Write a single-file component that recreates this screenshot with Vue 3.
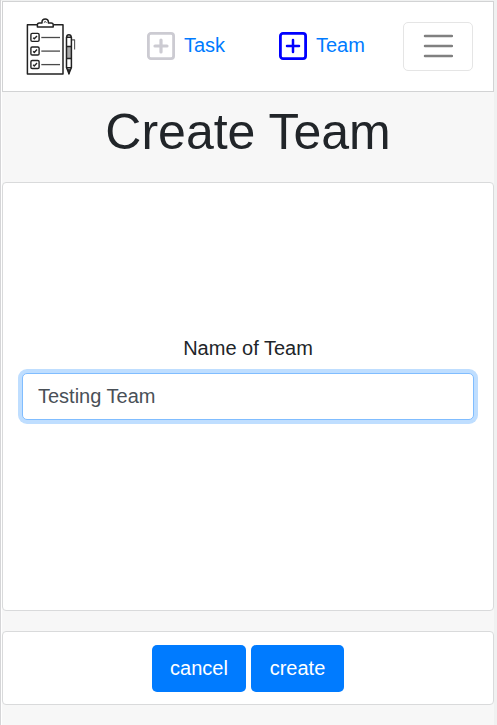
<script setup>
import { ref } from 'vue'

const teamName = ref('Testing Team')
const links = [
  { label: 'Task', tone: 'muted' },
  { label: 'Team', tone: 'active' },
]
const rows = [37.3, 50.9, 64.4]
</script>

<template>
  <div class="frame">
    <main class="page">
      <nav class="navbar">
        <svg class="logo" viewBox="24 16 54 60" fill="none" stroke="#222" stroke-width="1.5" stroke-linejoin="round">
          <path d="M37 24.8H27.4V74H63V24.8H53.5" />
          <path d="M37.4 27.1V24.8Q37.4 23 39.3 23H42V21.8Q42.2 18.9 45.2 18.9T48.4 21.8V23H51.2Q53.2 23 53.2 24.8V27.1Z" />
          <path d="M43.9 22.5Q45.2 20.6 46.5 22.5" stroke-width="1" />
          <g v-for="y in rows" :key="y">
            <rect x="30.9" :y="y - 3.9" width="8.2" height="8" rx="1.3" stroke-width="1.4" />
            <path :d="`M33.2 ${y + 0.4}l1.1 1.1 2.7-2.8`" stroke-width="1.4" />
            <path :d="`M41.3 ${y + 0.2}H60`" stroke="#4a4a4a" stroke-width="1.3" />
          </g>
          <rect x="66.5" y="46.5" width="5" height="12" fill="#aaa" stroke="none" />
          <path d="M66.5 67.5V37.2H71.4V67.5L68.9 73.6Z" />
          <path d="M66.7 37.2Q66.7 34.7 68.9 34.7T71.2 37.2M66.2 46.5H71.7M66.2 58.5H71.7M66.4 67.7H71.5" />
          <path d="M72 39.9H74.6V49.5" stroke="#555" stroke-width="1.1" />
          <path d="M68.1 69.5H69.7L68.9 74.4Z" fill="#222" stroke-width=".8" />
        </svg>
        <div class="links">
          <a v-for="link in links" :key="link.label" class="link">
            <svg class="plus" :class="link.tone" viewBox="0 0 28 28" fill="none" stroke="currentColor">
              <rect x="1.4" y="1.4" width="25.2" height="25.2" rx="2.6" stroke-width="2.8" />
              <path d="M14 8V20M8 14H20" :stroke-width="link.tone === 'muted' ? 3.2 : 2.5" stroke-linecap="round" />
            </svg>
            <span>{{ link.label }}</span>
          </a>
        </div>
        <button class="toggler" type="button" aria-label="Menu">
          <svg viewBox="0 0 30 24" stroke="#808080" stroke-width="2.5" stroke-linecap="round">
            <path d="M2 2H29M2 12H29M2 22H29" />
          </svg>
        </button>
      </nav>
      <h1 class="title">Create Team</h1>
      <section class="panel body">
        <label class="label" for="team-name">Name of Team</label>
        <input id="team-name" v-model="teamName" class="field" type="text" />
      </section>
      <footer class="panel actions">
        <button class="btn cancel" type="button">cancel</button>
        <button class="btn create" type="button">create</button>
      </footer>
    </main>
  </div>
</template>

<style>
body {
  background: #f0f1f1;
}
</style>

<style scoped>
.frame,
.frame * {
  box-sizing: border-box;
}
.frame {
  height: 725px;
  padding: 1px 3px 0 0;
  border-left: 1px solid #d5d5d7;
  overflow: hidden;
  font: 20px/30px "Liberation Sans", Arial, sans-serif;
  color: #212529;
}
.page {
  height: 724px;
  background: #f7f7f7;
  border-left: 1px solid #fff;
}
.navbar {
  display: flex;
  align-items: flex-start;
  height: 91px;
  padding: 14px 20px 0 21px;
  background: #fff;
  border: 1px solid #d2d3d4;
}
.logo {
  width: 54px;
  height: 60px;
}
.links {
  display: flex;
  gap: 54px;
  margin: 14px 0 0 69px;
}
.link {
  display: flex;
  align-items: flex-start;
  gap: 9px;
  width: 78px;
  color: #007bff;
  white-space: nowrap;
}
.plus {
  flex: none;
  width: 28px;
  height: 28px;
  margin-top: 2px;
}
.muted {
  color: #cccbd2;
}
.active {
  color: #0000ff;
}
.toggler {
  display: flex;
  align-items: center;
  justify-content: center;
  flex: none;
  width: 70px;
  height: 49px;
  margin: 6px 0 0 auto;
  padding: 0 0 1px;
  background: transparent;
  border: 1px solid #e5e5e5;
  border-radius: 5px;
}
.toggler svg {
  width: 30px;
  height: 24px;
}
.title {
  height: 90px;
  margin: 0;
  padding-top: 10px;
  font-size: 50px;
  font-weight: 400;
  line-height: 60px;
  text-align: center;
}
.panel {
  background: #fff;
  border: 1px solid #d9dadb;
  border-radius: 4px;
}
.body {
  display: flex;
  flex-direction: column;
  height: 429px;
  padding: 150px 19px 0;
}
.label {
  margin-bottom: 10px;
  text-align: center;
}
.field {
  width: 100%;
  height: 47px;
  padding: 0 15px;
  font: inherit;
  color: #495057;
  background: #fff;
  border: 1px solid #80bdff;
  border-radius: 5px;
  outline: none;
  box-shadow: 0 0 0 4px #bfdeff;
}
.actions {
  display: flex;
  justify-content: center;
  gap: 5px;
  height: 74px;
  margin-top: 20px;
  padding-top: 13px;
}
.btn {
  height: 47px;
  padding: 0 0 2px;
  font: inherit;
  color: #fff;
  background: #007bff;
  border: 0;
  border-radius: 5px;
}
.cancel {
  width: 94px;
}
.create {
  width: 93px;
}
</style>
